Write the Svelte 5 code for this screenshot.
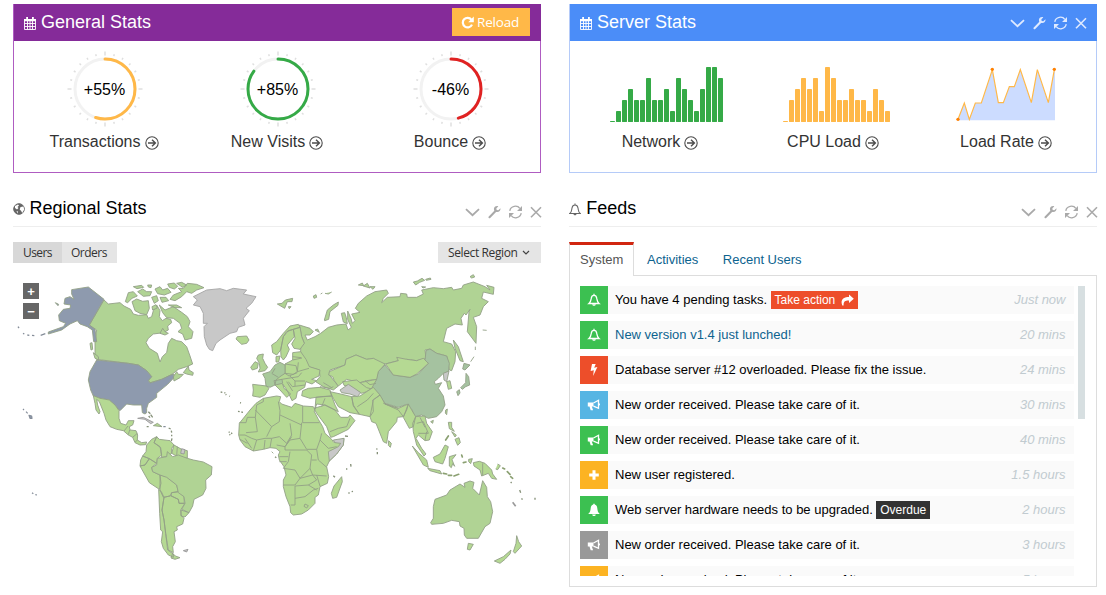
<script>
  const ticks = Array.from({ length: 24 }, (_, i) => i);
  const pies = [
    { label: 'Transactions', text: '+55%', value: 55, color: '#ffb848' },
    { label: 'New Visits', text: '+85%', value: 85, color: '#35aa47' },
    { label: 'Bounce', text: '-46%', value: 46, color: '#e02222' }
  ];
  const circ = 2 * Math.PI * 30;
  const bars = [
    { label: 'Network', color: '#35aa47', shift: 13, data: [0, 1, 2, 3, 2, 2, 4, 2, 2, 3, 1, 4, 3, 2, 1, 3, 5, 5, 4] },
    { label: 'CPU Load', color: '#ffb848', shift: 7, data: [0, 2, 3, 4, 3, 4, 1, 5, 4, 2, 2, 3, 2, 2, 1, 3, 2, 1] }
  ];
  const feeds = [
    { icon: 'bello', color: '#3cc051', text: 'You have 4 pending tasks.', tag: 'Take action', tagColor: '#ed4e2a', share: true, time: 'Just now' },
    { icon: 'bello', color: '#3cc051', text: 'New version v1.4 just lunched!', link: true, time: '20 mins' },
    { icon: 'bolt', color: '#ed4e2a', text: 'Database server #12 overloaded. Please fix the issue.', time: '24 mins' },
    { icon: 'horn', color: '#57b5e3', text: 'New order received. Please take care of it.', time: '30 mins' },
    { icon: 'horn', color: '#3cc051', text: 'New order received. Please take care of it.', time: '40 mins' },
    { icon: 'plus', color: '#fcb322', text: 'New user registered.', time: '1.5 hours' },
    { icon: 'bell', color: '#3cc051', text: 'Web server hardware needs to be upgraded.', tag: 'Overdue', tagColor: '#333333', time: '2 hours' },
    { icon: 'horn', color: '#999999', text: 'New order received. Please take care of it.', time: '3 hours' },
    { icon: 'horn', color: '#fcb322', text: 'New order received. Please take care of it.', time: '5 hours' }
  ];
</script>

{#snippet calendar()}
  <svg class="cal" width="12" height="13" viewBox="0 0 12 13"><path fill="none" stroke="#fff" stroke-width=".9" d="M.5 3.500h11v9H.5zM.5 6.500h11M.5 9.500h11M3.500 4v8.500M6 4v8.500M8.500 4v8.500" /><path fill="#fff" d="M0 2h12v2.300H0zM2.200 0h1.800v3H2.200zM8 0h1.800v3H8z" /></svg>
{/snippet}

{#snippet tools(color)}
  <svg class="tools" width="77" height="14" viewBox="0 0 77 14" fill="none" stroke={color}>
    <path stroke-width="1.800" d="M1 4.200l6.500 6 6.500-6" />
    <path stroke-width="2.100" stroke-linecap="round" d="M24.500 12.200l6.300-6.400" />
    <path fill={color} stroke="none" d="M33.300 1.200l-2 2.200.4 1.500 1.600.3 2.200-2c.3 2.300-1.500 4-3.600 3.800-1.600-.1-3-1.200-3-3 .1-2 2-3.400 4.400-2.800z" />
    <path stroke-width="1.300" d="M44.800 5.800c.8-5 7.500-6 10-2.400M56.200 8.200c-.8 5-7.500 6-10 2.400" />
    <path fill={color} stroke="none" d="M57 1v5h-5zM44 13V8h5z" />
    <path stroke-width="1.600" d="M66 2.300l10 10m0-10l-10 10" />
  </svg>
{/snippet}

{#snippet stat(label)}
  <div class="label">{label}<svg width="14" height="14" viewBox="0 0 14 14" fill="none" stroke="#4c4c4c"><circle cx="7" cy="7" r="6.200" stroke-width="1.100" /><path stroke-width="1.400" d="M3 7h7M7 3.700L10.400 7 7 10.300" /></svg></div>
{/snippet}

{#snippet glyph(name)}
  <svg width="14" height="14" viewBox="0 0 14 14" fill="#fff">
    {#if name === 'bello'}
      <path fill="none" stroke="#fff" stroke-width="1.300" d="M2 10.500c1.800-1.400 2-3.200 2.300-5.300C4.500 3.500 5.400 2.300 7 2.300s2.500 1.200 2.700 2.900c.3 2.100.5 3.900 2.300 5.300zM7 2V.8" /><path d="M5.200 11.300h3.600C8.600 13.300 5.400 13.300 5.200 11.300z" />
    {:else if name === 'bell'}
      <path d="M1.200 11c2-1.500 2.200-3.500 2.500-5.800C3.900 3.200 4.700 1.900 6.300 1.600V.7h1.400v.9c1.600.3 2.400 1.600 2.600 3.600.3 2.300.5 4.300 2.500 5.800zM5.200 11.500h3.600C8.600 13.500 5.400 13.500 5.200 11.500z" />
    {:else if name === 'bolt'}
      <path d="M5 1h3.700L7.200 4.700l3.200-.6L6.100 13l.7-5.700-3.200.7z" />
    {:else if name === 'plus'}
      <path d="M5.500 2.200h3v3.300h3.300v3H8.500v3.300h-3V8.500H2.200v-3h3.300z" />
    {:else}
      <path d="M.8 4.600h5.700v4H4.800l1.300 3.600H3.700L2.500 8.600H.8z" /><path fill="none" stroke="#fff" stroke-width="1.300" d="M6.500 5L11.500 2.300v8L6.500 8.200" /><path d="M11.500 5.200c2 0 2 2.400 0 2.400z" />
    {/if}
  </svg>
{/snippet}

<div class="page">
  <section class="box purple">
    <header>{@render calendar()}<h3>General Stats</h3>
      <button class="reload"><svg width="13" height="13" viewBox="0 0 13 13"><path fill="none" stroke="#fff" stroke-width="2.200" d="M10.400 3.600A4.800 4.800 0 1 0 11 8.600" /><path fill="#fff" d="M12.800.5v5.700H7.200z" /></svg>Reload</button>
    </header>
    <div class="cols">
      {#each pies as p}
        <div class="col">
          <div class="pie">
            <svg width="76" height="76" viewBox="-38 -38 76 76" fill="none">
              {#each ticks as t}
                <path d={t % 6 === 0 ? 'M0-37.500v4' : 'M0-36v2'} stroke="#dfdfdf" stroke-width="1.500" transform="rotate({t * 15})" />
              {/each}
              <circle r="30" stroke="#f2f2f2" stroke-width="3" />
              <circle r="30" stroke={p.color} stroke-width="3" stroke-linecap="round" stroke-dasharray="{(circ * p.value) / 100} {circ}" transform="rotate(-90)" />
            </svg>
            <span>{p.text}</span>
          </div>
          {@render stat(p.label)}
        </div>
      {/each}
    </div>
  </section>

  <section class="box blue">
    <header>{@render calendar()}<h3>Server Stats</h3>{@render tools('#dfeaff')}</header>
    <div class="cols">
      {#each bars as b}
        <div class="col">
          <div class="spark">
            <svg style:margin-left="{b.shift}px" width={b.data.length * 6 - 1} height="55" fill={b.color}>
              {#each b.data as v, i}
                <rect x={i * 6} y={v ? 55 - v * 11 : 54} width="5" height={v ? v * 11 : 1} rx=".4" />
              {/each}
            </svg>
          </div>
          {@render stat(b.label)}
        </div>
      {/each}
      <div class="col">
        <div class="spark">
          <svg width="100" height="55" viewBox="378 200 300 165">
            <path fill="#ccdcff" d="M384 360V357L403 308 418 357 436 308H454L487 208 505 307H520L538 259H553L571 208 604 307 622 208 655 307 673 208h2V360z" />
            <path fill="none" stroke="#ffb848" stroke-width="3.500" d="M384 357L403 308 418 357 436 308H454L487 208 505 307H520L538 259H553L571 208 604 307 622 208 655 307 673 208" />
            <g fill="#ff8000"><circle cx="384" cy="357" r="5" /><circle cx="487" cy="207" r="5" /><circle cx="673" cy="207" r="5" /></g>
          </svg>
        </div>
        {@render stat('Load Rate')}
      </div>
    </div>
  </section>

  <section class="plain">
    <header>
      <svg class="globe" width="12" height="12" viewBox="0 0 12 12"><circle cx="6" cy="6" r="5.300" fill="#666" stroke="#666" /><path fill="#fff" d="M2 3l3-1.500 1 1L4.500 4l1 1L4 6.500 2 5zM7.500 4l3-.5.7 3-2 3.500-1-2-1.500-1.500zM3.500 8l1.500.5-.5 2z" /></svg>
      <h3>Regional Stats</h3>{@render tools('#a9a9a9')}
    </header>
    <div class="bar">
      <div class="group"><button class="users on">Users</button><button class="orders">Orders</button></div>
      <button class="select">Select Region<svg width="8" height="6" viewBox="0 0 8 6"><path fill="none" stroke="#444" stroke-width="1.200" d="M1 1l3 3 3-3" /></svg></button>
    </div>
    <div class="map">
      <div class="zoom"><button>+</button><button>−</button></div>
      <svg width="528" height="300" viewBox="39 810 1584 900" stroke="#93a087" stroke-width="2.700" stroke-linejoin="round">
        <g transform="translate(0 570)" fill="#b0d394">
          <path d="M312 330L325 342 360 338 372 348 392 358 400 372 415 376 440 374 445 385 455 380 460 362 470 345 480 362 478 380 487 392 498 385 512 388 515 398 503 408 505 420 490 428 460 432 445 445 438 458 448 475 472 490 480 516 487 500 500 488 505 460 515 445 530 452 545 455 560 470 570 498 578 522 560 530 535 538 520 550 510 556 485 568 450 578 445 570 455 560 440 542 415 525 385 520 290 508 285 490 285 455 290 420 268 405z" />
          <path d="M478 345L495 360 520 350 545 367 562 380 570 395 565 410 579 425 575 445 555 450 548 432 534 425 545 415 540 400 520 385 500 383 488 368zM396 335L410 327 428 334 445 332 448 355 440 374 420 370 405 362zM376 335L385 308 400 305 412 318 396 325 383 338zM562 280L590 283 612 293 590 300 575 310 560 305 545 320 525 332 510 328 520 315 545 305 535 295 550 295zM503 282l20-3 10 10-10 8-15-5zM400 290l25-4 6 6-20 4zM413 305l15-8 12 8 15 0-5 12-20 2zM443 285l12 0-2 8-8-2zM465 297l15-7 8 10 15-5 10 12-20 8-20-4zM455 322l15-5 5 15-12 8zM480 322l18 0 8 10-20 5zM505 345l25 0 15 8-20 0zM530 280l15-3 15 8-12 7zM456 350l12-6 4 10-14 6zM480 430l8-15 7 10 10 5-10 5zM550 548L565 528 567 540 580 548 578 556 560 552zM520 560l10-15 5 8 15 0-10 10-18 10zM270 460l6-2 2 20-5 2zM280 488l15 12 1 10-11-5z" />
          <path fill="#8e9aae" d="M215 299L265 291 312 328 268 405 285 418 290 455 281 455 277 420 262 410 240 402 232 392 210 402 185 420 145 432 145 426 190 410 197 400 178 392 176 375 190 358 210 355 212 345 192 342 195 325 210 320 222 328 215 312zM166 338l10 5-2 4zM290 510L385 520 415 525 440 542 455 560 445 572 450 579 485 568 510 556 522 552 520 565 503 583 470 610 470 622 445 640 440 655 440 668 435 672 427 668 425 645 400 645 380 642 360 662 352 655 345 645 330 643 328 630 300 625 280 618 272 600 265 570 270 545z" />
          <path fill="none" stroke="#858d99" stroke-width="4" d="M136 431l-14 5M103 437l-7-1M88 436l-6-1M73 432l-4-2M57 414l-3-4" />
          <path fill="#c8c8c8" stroke="#a5a5a5" d="M580 320L600 310 620 300 660 296 680 302 700 295 740 300 730 312 768 320 755 340 738 355 748 362 730 385 735 405 715 412 710 425 690 430 660 450 648 460 638 482 628 478 620 465 613 440 612 410 622 400 610 400 610 370 600 350 580 345 592 330z" />
          <path fill="#b5d993" d="M708 447L712 440 740 438 747 450 740 460 725 463z" />
          <path d="M752 532L765 515 775 520 772 535 757 540zM775 495L790 492 788 505 795 520 803 532 795 542 775 546 780 535 778 520 770 505z" />
        </g>
        <g transform="translate(810 570)" fill="#b5d993">
          <path fill="#b0d394" d="M88 405L120 415 130 425 120 435 105 435 112 450 135 440 152 430 175 412 200 405 228 402 234 420 244 412 233 388 233 363 243 385 247 400 255 392 245 372 270 367 256 355 265 340 290 318 315 305 350 300 355 310 340 325 335 338 352 322 390 320 392 310 410 312 412 322 440 322 460 312 455 300 490 293 520 296 545 292 550 300 575 295 580 285 610 276 645 290 660 300 650 286 672 292 670 313 640 306 635 325 655 335 640 350 630 375 610 382 620 410 618 460 592 425 597 365 600 358 588 375 583 370 573 385 577 405 555 402 530 415 520 455 545 462 557 485 555 515 545 542 538 540 530 498 500 490 480 477 465 480 468 505 440 512 410 508 385 512 345 522 330 520 310 505 290 508 258 495 228 508 225 525 180 540 178 555 205 588 190 600 160 590 137 575 150 560 148 540 115 530 105 510 92 500 92 470 103 460 95 440 90 412zM214 370l10-2 5 15 3 18-12-5zM163 390L172 360 190 345 205 336 204 346 180 365 176 388 164 392zM22 342l14-2 10-10 22-5-2 10-14 0-8 20zM55 350l8 0-5 6zM130 318l8-4 2 8-8 3zM152 312l5-3M165 310l10 2 10-6M265 285l12-6 4 8zM280 288l12-8 8 14zM300 290l15 0-6 8zM430 276l12-3 14-8 8 6-15 6-12 8zM467 268l14-4 2 4-14 3zM455 290l12 1-8 3zM600 260l10-6 4 7-9 3zM638 420l12 1M550 450l15 20 15 45-10-3-15-37zM616 470l0 10M612 500l-10 15M135 420l8-3 5 10z" />
          <path fill="#a5c2a0" d="M345 525L370 555 420 562 445 552 475 520 465 512 468 482 480 477 500 490 530 498 538 520 535 545 520 550 505 565 493 575 496 583 515 578 505 595 520 618 525 645 515 665 500 680 475 685 455 675 435 680 425 658 410 643 385 652 345 640 325 610 305 590 318 570 325 545zM582 520l18 5-15 15-7-3zM588 550l8 10 3 25-12 5-10 8-5-5 15-15zM560 605l8-6 2 10-6 8z" />
          <path d="M347 522L385 512 380 502 410 508 440 512 460 505 475 520 440 552 420 562 370 555zM178 545L225 525 228 508 258 495 290 508 310 505 345 522 325 545 320 568 290 572 270 578 230 568 215 580 205 588 193 572 188 560 176 555z" />
          <path fill="#c8c8c8" d="M520 550L537 543 530 575 522 570z" />
          <path d="M530 575l10-3 5 23-10 3zM5 465L20 455 40 430 60 408 85 403 90 412 70 418 50 425 40 440 32 480 20 495 8 488zM32 480L40 440 55 422 70 418 73 440 52 465 58 478 48 500 40 510 33 500zM70 418L90 412 95 440 103 460 90 478 72 475 65 462 75 445z" />
          <path d="M45 522L68 510 68 488 92 485 108 508 118 530 150 540 147 558 125 568 140 572 126 582 108 575 104 592 82 605 78 625 66 632 52 602 38 582 42 595 62 612 50 622 30 600 15 585 18 560 30 555 45 550zM18 500l12-2-4 18-8 0zM-52 583L-10 588 -3 595 -15 615 -30 622 -52 618 -50 600zM218 575L260 570 270 578 320 568 305 595 290 605 275 610 240 590 222 586z" />
          <path fill="#a8c99b" d="M-22 552L0 545 15 525 30 517 45 525 45 550 30 560 18 570 15 585 0 592 -12 588 -15 565zM12 572L36 568 38 580 15 585z" />
          <path fill="none" d="M45 522l33 5 4 18-12 8-25-3M68 500l26 3M68 510l28-6M82 545l3-28M82 545l35-10M45 550l12 8 25-10M35 568l50-8M60 558l15 15 30 0M55 575l12 15 38-5M75 573l0 15M50 575l18 28M85 560l10-12M5 550l20 12M15 535l-8 14M270 578l20 15 20 5M285 572l15 12 18-4" />
        </g>
        <g transform="translate(0 1140)" fill="#b5d993">
          <path d="M280 47L300 55 328 60 345 75 357 92 357 115 362 130 378 135 385 122 402 122 398 135 388 140 390 150 408 152 413 165 412 180 425 188 440 186 437 194 420 195 405 188 398 172 385 165 370 152 350 148 330 140 318 120 312 100 298 65 290 58 293 75 300 95 297 102 288 90 285 70zM372 153l12-15M385 164l4-14M398 172l14-12M406 186l6-6M460 137l12-7 14 10z" />
          <path fill="none" stroke="#859078" stroke-width="4" d="M440 140l6 0M506 144l6 3M514 152l1 6M515 164l0 5M516 175l-2 8M445 95l6 6M452 104l6 8M446 108l4 5M662 36l5 1M673 38l3 1M677 43l2 2M688 48l2 1M720 68l3 1M714 94l5 1M724 96l5 1M686 156l3 1M694 158l2 4M688 163l3 2M825 230l4 3" />
          <path d="M440 195L455 178 470 170 462 188 480 200 485 225 472 235 470 250 448 236 428 228 438 215zM462 188L470 170 478 178 510 182 522 195 515 205 515 220 500 230 485 232 482 203zM522 195L545 208 562 212 562 235 530 228 515 220zM428 228L448 236 435 255 420 258 422 240zM420 258L435 255 448 236 470 250 455 262 458 275 480 285 483 310 478 328 448 308 435 285zM480 285L500 290 530 315 535 335 515 338 510 348 490 352 480 330zM515 338L535 335 552 350 553 370 537 370 535 358 513 348zM476 328L484 335 492 352 486 390 492 420 497 460 503 510 520 522 520 532 505 525 490 505 484 485 488 455 482 450 479 400zM492 352L513 347 535 358 537 370 555 370 542 390 543 405 552 415 548 432 530 440 532 450 522 455 526 485 518 500 520 518 505 510 497 460 492 420 486 390zM543 390L567 398 555 411 543 408zM518 520l8 8 14 5-15 5-12-4zM532 200l-2 28" />
          <path fill="#b0d394" d="M472 235L500 230 502 215 518 230 535 225 562 235 580 240 610 246 636 260 634 285 617 300 618 325 608 345 582 358 578 378 567 398 545 388 555 370 552 350 535 338 530 315 500 292 480 285 458 275 455 262 470 255z" />
          <path fill="#c8c8c8" stroke="#999" d="M545 206l10 3-3 13-10-2zM413 115L430 112 460 127 452 131 435 118zM550 512l14-4-4 8z" />
          <path fill="#8e9aae" stroke="#858d99" stroke-width="3.500" d="M87 106l8 2 1 7-6 0zM69 87l3 3M78 95l5 5M490 140l7 0M96 338l4 3M106 344l5 1" />
        </g>
        <g transform="translate(810 1140)" fill="#b5d993">
          <path d="M-42 70L-20 55 20 48 32 50 28 65 35 72 65 82 75 70 100 78 130 80 137 90 132 93 145 118 158 140 165 160 185 178 192 188 222 175 220 195 200 222 178 243 170 260 176 290 172 310 150 320 145 345 135 352 135 370 115 390 95 402 70 405 62 398 60 380 48 350 40 320 40 300 48 285 42 260 28 240 25 225 30 215 18 205 0 203 -20 208 -50 213 -75 200 -90 180 -94 165 -92 130 -60 90z" />
          <path fill="none" d="M-92 128L-72 128-68 112-44 112-40 75-20 65-20 55M-44 90L5 140 28 125 30 92 25 65M30 105L95 135M98 78V128H148M95 128L90 175 60 180 45 200 20 195M60 130L65 165 50 190 28 170 5 175-15 175-40 180-55 175-75 165-92 165M5 140L-10 170M-44 112L-38 155-72 158M5 175L0 203M-15 180L-18 208M-40 180L-50 213M-75 175L-55 205M-90 178L-68 190M90 175L110 208 140 208 150 180 155 160M150 180L175 205 200 200M140 208L145 240 170 262M45 210H110L125 225 120 265 128 285 170 288M60 215L55 245 40 265 75 270 90 295 75 315 40 315M120 265L90 295 128 285 140 300 115 315 75 318M75 318V375L62 375M75 355L105 350 130 330 145 325M140 285L150 318M115 315L140 330M105 372l10 5-5 7-8-5zM28 230H55M28 245H50M65 170L45 200 45 210M140 240L125 240M5 215L10 220" />
          <path fill="#c8c8c8" d="M190 180L222 175 220 195 200 222 178 243 175 215 205 200 212 190 195 188z" />
          <path d="M98 32L115 25 150 22 180 30 185 48 150 50 120 55 95 47zM180 35L212 42 245 50 250 75 268 103 240 98 205 80 190 55zM138 52L185 48 195 75 205 95 195 90 165 75 140 72 135 88zM132 85L165 75 195 90 212 112 235 112 240 105 255 122 235 148 190 170 182 172 170 140 140 100zM245 50L270 48 310 22 330 45 308 60 310 95 300 110 268 103 250 78zM310 60L330 45 345 72 385 85 415 72 410 90 400 110 382 112 380 125 355 155 350 190 340 185 318 130 305 125 300 110zM415 72L425 90 437 110 430 140 418 145 400 112zM437 110L465 108 470 130 487 155 478 180 465 182 445 165 438 175 455 205 468 222 462 228 440 195 430 155 428 130z" />
          <path fill="none" d="M340 70l45 15M345 72l40 18M385 90l15 20M440 130l20-5 15 35-30 0M450 112l15 30M470 155l-5 25M165 55l-10 25M180 155l25-10 25-5 10-25M262 80l30-20 18-20M150 20l30 5 10-5M160 8l25 15" />
          <path fill="#c8c8c8" d="M210 30L235 13 258 28 272 38 262 50 240 42 215 38z" />
          <path d="M356 182l8 8-3 12-6-6zM427 198L445 218 470 240 475 262 460 255zM473 265L510 272 515 282 480 272zM490 232L510 222 525 195 535 200 525 235 518 252 495 245zM538 230l20-6-12 15 8 20-6-8-4 12-6-5zM535 127l10 0 0 15 8 12-15-8zM555 178l12-5 4 15-8 8zM545 155l14 10-4 6zM596 238l11-2-5 15-6-6zM610 248L628 244 645 250 665 270 668 282 680 298 665 295 655 280 635 288 630 270 612 258zM638 250V286M683 252l8 5-8 12-6-2M527 90l5-3-2 17-4-5zM482 125l8-4-2 9zM595 490l15 3-10 17-8-2z" />
          <path fill="none" stroke="#8ba072" stroke-width="5" stroke-linecap="round" d="M527 180l8-12M520 280l10 2M535 286l10 0M552 288l14-5M580 248l8-2M575 225l2 6M698 264l6 3M712 275l8 8M722 290l6 5" />
          <path fill="none" stroke="#859078" stroke-width="4" d="M722 306l3 3M749 330l3 8M754 356l4 2M795 353v6M320 205l1 4M322 216v7M242 252l1 8M228 267l4 0M190 287l5 5M235 339l4 0M245 335l4-1M225 168l9 1" />
          <path fill="none" stroke="#999" stroke-width="5" d="M728 367l9 12" />
          <path fill="#b0d394" d="M495 358L530 345 540 330 570 312 585 322 582 310 600 303 612 307 608 325 628 345 638 302 650 322 652 350 662 365 668 395 660 430 645 440 625 475 590 475 583 465 582 445 570 438 568 425 545 421 520 430 485 433 482 428 490 415 490 380z" />
          <path d="M740 467L746 485 755 498 735 520 730 515 738 490zM673 543L700 530 723 510 720 522 705 538 690 550zM215 290L217 305 200 352 188 355 184 340 192 318z" />
        </g>
      </svg>
    </div>
  </section>

  <section class="plain">
    <header>
      <svg class="globe bell" width="12" height="14" viewBox="0 0 12 14"><path fill="none" stroke="#666" stroke-width="1.100" d="M.8 10.500c2-1.300 1.800-3.500 2.200-5.500C3.300 3.200 4.300 2 6 2s2.700 1.200 3 3c.4 2 .2 4.200 2.200 5.500zM6 2V.5" /><path fill="#666" d="M4.500 11h3c0 1.800-3 1.800-3 0z" /></svg>
      <h3>Feeds</h3>{@render tools('#a9a9a9')}
    </header>
    <nav><span class="active">System</span><span>Activities</span><span>Recent Users</span></nav>
    <div class="panel">
      <ul>
        {#each feeds as f}
          <li>
            <i style:background={f.color}>{@render glyph(f.icon)}</i>
            <span class:link={f.link}>{f.text}</span>
            {#if f.tag}
              <b style:background={f.tagColor}>{f.tag}{#if f.share}<svg width="13" height="12" viewBox="0 0 13 12"><path fill="#fff" d="M8 .5L12.800 4.700 8 9V6.500C4.500 6.400 2.500 7 2.600 11.500H1.300C-1 6 2.500 3 8 3z" /></svg>{/if}</b>
            {/if}
            <em>{f.time}</em>
          </li>
        {/each}
      </ul>
      <div class="thumb"></div>
    </div>
  </section>
</div>

<style>
  :global(body) { margin: 0; background: #fff; overflow: hidden; }
  .page { box-sizing: border-box; width: 1106px; height: 595px; padding: 4px 9px 0 13px; display: grid; grid-template-columns: 528px 528px; grid-template-rows: 169px 414px; column-gap: 28px; font-family: 'Liberation Sans', Arial, sans-serif; font-size: 13px; color: #000; overflow: hidden; }
  section, header, .box { box-sizing: border-box; }
  svg { display: block; flex: none; }
  h3 { margin: 0; font-size: 18px; font-weight: 400; line-height: 20px; white-space: nowrap; }
  button { border: 0; margin: 0; padding: 0; font-family: 'Open Sans', sans-serif; }
  header { display: flex; }
  .tools { margin-left: auto; }
  .box { border: 1px solid; border-top: 0; }
  .box header { height: 37px; padding: 8px 9px 0 10px; margin: 0 -1px 0 0; color: #fff; }
  .purple { border-color: #af5cc1; }
  .purple header { background: #852b99; }
  .blue { border-color: #b5cbf8; }
  .blue header { background: #4b8df8; padding-right: 10.500px; }
  .cal { margin: 5px 5px 0 0; }
  .box .tools { margin-top: 4px; }
  .reload { display: flex; align-items: center; gap: 3px; width: 78px; height: 28px; margin: -4px 2px 0 auto; padding-left: 9px; background: #ffb848; color: #fff; font-size: 13.500px; letter-spacing: -.2px; }
  .cols { display: grid; grid-template-columns: repeat(3, 173px); padding: 10px 3px 0 4px; }
  .blue .cols { padding: 10px 4px 0 3px; }
  .pie { display: grid; justify-content: center; align-items: center; height: 76px; }
  .pie svg, .pie span { grid-area: 1 / 1; text-align: center; }
  .pie span { font-size: 16px; padding-top: 2px; }
  .spark { display: flex; justify-content: center; align-items: flex-end; height: 71px; padding-bottom: 5px; }
  .label { display: flex; justify-content: center; gap: 4px; margin-top: 5px; font-size: 16px; line-height: 19px; color: #333; }
  .purple .label { padding-right: 1px; }
  .blue .label { padding-left: 1px; }
  .label svg { margin-top: 4px; }
  .plain header { height: 54px; border-bottom: 1px solid #eee; padding-top: 25px; }
  .plain { display: flex; flex-direction: column; }
  .globe { margin: 5px 4.500px 0 0; }
  .bell { margin-right: 5.200px; }
  .plain .tools { margin-top: 7px; margin-right: -.5px; }
  .bar { display: flex; justify-content: space-between; margin-top: 15px; height: 21px; }
  .group { display: flex; }
  .bar button { display: flex; align-items: center; gap: 4px; padding: 0 0 0 10px; background: #e5e5e5; color: #333; font-size: 12px; letter-spacing: -.38px; white-space: nowrap; }
  .bar .users { width: 49px; letter-spacing: -.6px; }
  .bar .orders { width: 55px; padding-left: 9px; letter-spacing: -.5px; }
  .bar .select { width: 103px; }
  .bar .on { background: #d8d8d8; }
  .map { display: grid; margin-top: 7px; }
  .map > * { grid-area: 1 / 1; }
  .zoom { z-index: 1; display: flex; flex-direction: column; gap: 4px; padding: 13px 0 0 10px; width: 16px; }
  .zoom button { width: 16px; height: 16px; background: #666; color: #fff; font: 700 13px/15px 'Liberation Sans', sans-serif; }
  nav { display: flex; margin-top: 15px; height: 34px; line-height: 35px; font-size: 13px; color: #0d638f; position: relative; z-index: 1; }
  nav span { box-sizing: border-box; padding: 0 11.500px 0 13px; }
  nav .active { width: 65px; height: 34px; padding: 0 0 0 10px; line-height: 29px; border: 1px solid #ddd; border-top: 3px solid #d12610; border-bottom: 0; background: #fff; color: #555; }
  .panel { box-sizing: border-box; height: 312px; margin-top: -1px; border: 1px solid #ddd; padding: 10px 11px 0 10px; display: flex; justify-content: space-between; }
  ul { margin: 0; padding: 0; list-style: none; width: 494px; height: 290px; overflow: hidden; }
  li { display: flex; align-items: center; height: 28px; margin-bottom: 7px; background: #fafafa; white-space: nowrap; }
  li span, li em { padding-bottom: 2px; }
  i { display: flex; align-items: center; justify-content: center; width: 28px; height: 28px; margin-right: 7px; }
  .link { color: #0d638f; }
  em { margin-left: auto; padding-right: 8.500px; color: #c1cbd0; }
  b { display: flex; align-items: center; gap: 5.500px; height: 18px; margin-left: 3.500px; padding: 0 4px; color: #fff; font-weight: 400; font-size: 12px; }
  .thumb { width: 7px; height: 133px; background: #d7dfe1; }
</style>
